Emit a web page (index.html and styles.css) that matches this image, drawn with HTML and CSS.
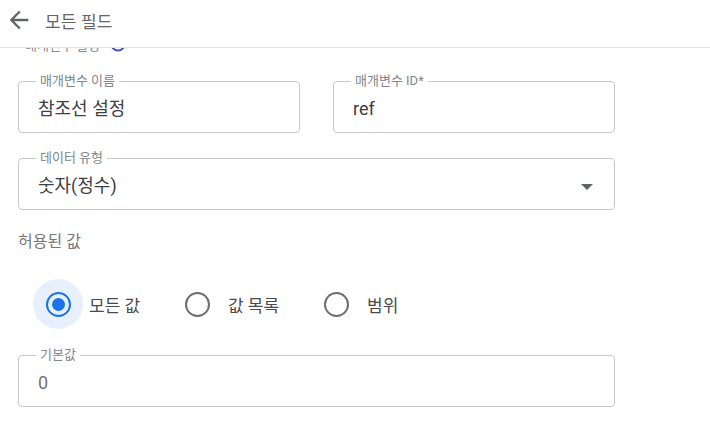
FILE: index.html
```html
<!DOCTYPE html>
<html lang="ko">
<head>
<meta charset="utf-8">
<link rel="stylesheet" href="styles.css">
</head>
<body>
<header class="topbar">
  <svg class="back" viewBox="0 0 24 24" width="28" height="28"><path d="M20 11H7.83l5.59-5.59L12 4l-8 8 8 8 1.41-1.41L7.83 13H20v-2z" fill="#5f6368"/></svg>
  <span class="title">모든 필드</span>
</header>
<main class="content">
  <div class="peek">
    <span class="peek-text">매개변수 설정</span>
    <svg class="help" viewBox="0 0 16 16" width="16" height="16"><circle cx="8" cy="8" r="6.5" fill="none" stroke="#3d4fc4" stroke-width="2"/></svg>
  </div>
  <div class="row">
    <fieldset class="field half">
      <legend>매개변수 이름</legend>
      <div class="value">참조선 설정</div>
    </fieldset>
    <fieldset class="field half">
      <legend>매개변수 ID*</legend>
      <div class="value">ref</div>
    </fieldset>
  </div>
  <fieldset class="field full select">
    <legend>데이터 유형</legend>
    <div class="value">숫자(정수)</div>
    <span class="caret"></span>
  </fieldset>
  <div class="section-label">허용된 값</div>
  <div class="radios">
    <label class="radio checked"><span class="ripple"><span class="ring"><span class="dot"></span></span></span><span class="rlabel">모든 값</span></label>
    <label class="radio"><span class="ripple"><span class="ring"></span></span><span class="rlabel">값 목록</span></label>
    <label class="radio"><span class="ripple"><span class="ring"></span></span><span class="rlabel">범위</span></label>
  </div>
  <fieldset class="field full last">
    <legend>기본값</legend>
    <div class="value muted">0</div>
  </fieldset>
</main>
</body>
</html>
```
FILE: styles.css
```css
* { box-sizing: border-box; }
html, body { margin: 0; padding: 0; background: #fff; }
body {
  width: 710px;
  height: 427px;
  overflow: hidden;
  font-family: "Roboto", "Noto Sans CJK KR", sans-serif;
  color: #3c4043;
}
.topbar {
  height: 48px;
  border-bottom: 1px solid #e3e3e3;
  display: flex;
  align-items: center;
  padding: 0 0 7px 5px;
}
.back { display: block; }
.title {
  margin-left: 12px;
  font-size: 17px;
  color: #666;
  font-family: "Noto Sans CJK KR", sans-serif;
}
.content {
  height: 379px;
  overflow: hidden;
  padding: 0 0 0 18px;
}
.peek {
  display: flex;
  align-items: center;
  height: 18px;
  margin-top: -13px;
  padding-left: 7px;
  gap: 10px;
}
.peek-text { font-size: 13px; color: #888; }
.help { display: block; }
.row {
  display: flex;
  gap: 33px;
  margin-top: 21px;
  width: 597px;
}
.field {
  margin: 0;
  border: 1px solid #c9c9c9;
  border-radius: 4px;
  padding: 0 19px 11px 19px;
  position: relative;
  min-width: 0;
}
.half { width: 282px; }
.full { width: 597px; margin-top: 18px; }
.field legend {
  font-size: 13px;
  line-height: 14px;
  color: #80868b;
  padding: 0 4px;
  margin-left: -2px;
}
.value {
  margin-top: 8px;
  font-size: 18px;
  line-height: 25px;
  color: #3c4043;
}
.value.muted { color: #757575; }
.caret {
  position: absolute;
  right: 21px;
  top: 19px;
  width: 0;
  height: 0;
  border-left: 6px solid transparent;
  border-right: 6px solid transparent;
  border-top: 6px solid #5f6368;
}
.section-label {
  margin-top: 23px;
  font-size: 16px;
  line-height: 18px;
  color: #777;
}
.radios {
  display: flex;
  align-items: center;
  margin-top: 27px;
  height: 52px;
  padding-left: 15px;
}
.radio {
  display: flex;
  align-items: center;
  width: 139px;
  flex: none;
}
.ripple {
  width: 50px;
  height: 50px;
  border-radius: 50%;
  display: flex;
  align-items: center;
  justify-content: center;
  flex: none;
}
.radio.checked .ripple { background: #e8f0fe; }
.ring {
  width: 25px;
  height: 25px;
  border: 2px solid #6e6e6e;
  border-radius: 50%;
  display: flex;
  align-items: center;
  justify-content: center;
}
.radio.checked .ring { border-color: #1a73e8; }
.dot {
  width: 13px;
  height: 13px;
  border-radius: 50%;
  background: #1a73e8;
}
.rlabel {
  margin-left: 6px;
  font-size: 17px;
  color: #4a4a4a;
}
.field.last { margin-top: 18px; }
```
